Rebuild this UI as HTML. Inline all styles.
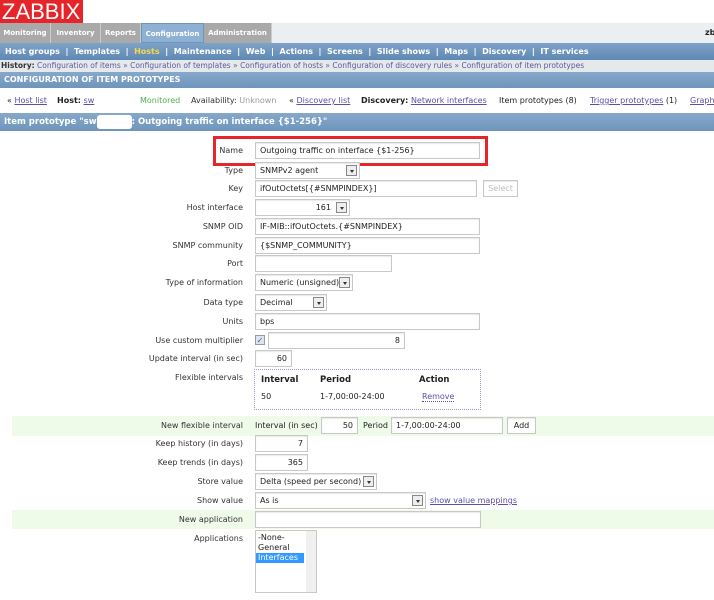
<!DOCTYPE html>
<html><head><meta charset="utf-8"><style>
*{margin:0;padding:0;box-sizing:border-box}
body{width:714px;height:600px;overflow:hidden;background:#fff;font-family:"DejaVu Sans","Liberation Sans",sans-serif;font-size:8px;color:#222;position:relative}
.a{position:absolute;white-space:nowrap}
.tab{position:absolute;top:23px;height:20px;line-height:20px;background:#a9a9a9;color:#fff;font-weight:bold;font-size:7px;text-align:center;border-right:1px solid #ccc;overflow:hidden}
.sub{position:absolute;top:43px;left:0;width:714px;height:17px;background:linear-gradient(#7fa3c8,#5e88b3);color:#fff;font-weight:bold;font-size:8px;line-height:17px}
.bar{position:absolute;left:0;width:714px;background:linear-gradient(#86a8ca,#6f95bc);color:#fff;font-weight:bold}
.lbl{position:absolute;right:471px;white-space:nowrap;font-size:8px;color:#333}
.in{position:absolute;border:1px solid #c8c8c8;background:#fff;font-size:8px;line-height:15px;padding:0 4px;height:17px;white-space:nowrap;box-shadow:inset 0 1px 1px #e8e8e8}
.r{text-align:right}
.dd{position:absolute;right:2px;top:2px;width:11px;height:11px;border:1px solid #888;background:#eee}
.dd:after{content:"";position:absolute;left:3px;top:4px;border:2px solid transparent;border-top:3px solid #333}
.sel{padding-right:18px}
a,.u{color:#5b4fa8;text-decoration:underline}
.green{position:absolute;left:12px;width:702px;background:#eefbe9}
</style></head><body>
<div class="a" style="left:0;top:0;width:83px;height:23px;background:#e5252a;color:#fff;font-family:'Liberation Sans',sans-serif;font-size:22px;line-height:24px;padding-left:2px;letter-spacing:0px">ZABBIX</div>
<div class="a" style="left:0;top:23px;width:714px;height:20px;background:#eceff1"></div>
<div class="tab" style="left:0;width:51px">Monitoring</div>
<div class="tab" style="left:51px;width:50px">Inventory</div>
<div class="tab" style="left:101px;width:40px">Reports</div>
<div class="tab" style="left:141px;width:63px;background:#8db0d3;border:1px solid #6f95bc">Configuration</div>
<div class="tab" style="left:204px;width:68px">Administration</div>
<div class="a" style="left:705px;top:28px;font-weight:bold">zb</div>
<div class="sub"><span class="a" style="left:5px">Host groups &nbsp;|&nbsp; Templates &nbsp;|&nbsp; <span style="color:#f5d94a">Hosts</span> &nbsp;|&nbsp; Maintenance &nbsp;|&nbsp; Web &nbsp;|&nbsp; Actions &nbsp;|&nbsp; Screens &nbsp;|&nbsp; Slide shows &nbsp;|&nbsp; Maps &nbsp;|&nbsp; Discovery &nbsp;|&nbsp; IT services</span></div>
<div class="a" style="left:0;top:60px;width:714px;height:12px;background:#e6e9ec;line-height:12px;padding-left:1px;color:#5b5a9a;font-size:7.5px"><b style="color:#333">History:</b> Configuration of items » Configuration of templates » Configuration of hosts » Configuration of discovery rules » Configuration of item prototypes</div>
<div class="bar" style="top:72px;height:16px;line-height:16px;padding-left:4px;font-size:8px">CONFIGURATION OF ITEM PROTOTYPES</div>
<div class="a" style="top:96px;left:7px">« <a>Host list</a></div>
<div class="a" style="top:96px;left:57px"><b>Host:</b> <a>sw</a></div>
<div class="a" style="top:96px;left:140px;color:#4caf50">Monitored</div>
<div class="a" style="top:96px;left:191px"><span style="color:#333">Availability:</span> <span style="color:#999">Unknown</span></div>
<div class="a" style="top:96px;left:289px">« <a>Discovery list</a></div>
<div class="a" style="top:96px;left:361px"><b>Discovery:</b> <a>Network interfaces</a></div>
<div class="a" style="top:96px;left:499px">Item prototypes (8)</div>
<div class="a" style="top:96px;left:590px"><a>Trigger prototypes</a> (1)</div>
<div class="a" style="top:96px;left:690px"><a>Graph</a></div>
<div class="bar" style="top:113px;height:18px;line-height:18px;padding-left:4px;font-size:8.5px">Item prototype "sw<span style="display:inline-block;width:35px;height:14px;background:#fff;vertical-align:middle;border-radius:3px"></span>: Outgoing traffic on interface {$1-256}"</div>

<div class="a" style="left:213px;top:136px;width:275px;height:30px;border:3px solid #e5252a"></div>
<div class="lbl" style="top:146px">Name</div><div class="in" style="left:255px;top:142px;width:225px">Outgoing traffic on interface {$1-256}</div>
<div class="lbl" style="top:166px">Type</div><div class="in sel" style="left:255px;top:162px;width:105px">SNMPv2 agent<span class="dd"></span></div>
<div class="lbl" style="top:184px">Key</div><div class="in" style="left:255px;top:180px;width:222px">ifOutOctets[{#SNMPINDEX}]</div>
<div class="in" style="left:483px;top:180px;width:35px;color:#bbb;text-align:center">Select</div>
<div class="lbl" style="top:203px">Host interface</div><div class="in sel r" style="left:255px;top:199px;width:95px">161<span class="dd"></span></div>
<div class="lbl" style="top:222px">SNMP OID</div><div class="in" style="left:255px;top:218px;width:225px">IF-MIB::ifOutOctets.{#SNMPINDEX}</div>
<div class="lbl" style="top:241px">SNMP community</div><div class="in" style="left:255px;top:237px;width:225px">{$SNMP_COMMUNITY}</div>
<div class="lbl" style="top:259px">Port</div><div class="in" style="left:255px;top:255px;width:137px"></div>
<div class="lbl" style="top:278px">Type of information</div><div class="in sel" style="left:255px;top:274px;width:98px">Numeric (unsigned)<span class="dd"></span></div>
<div class="lbl" style="top:298px">Data type</div><div class="in sel" style="left:255px;top:294px;width:72px">Decimal<span class="dd"></span></div>
<div class="lbl" style="top:317px">Units</div><div class="in" style="left:255px;top:313px;width:225px">bps</div>
<div class="lbl" style="top:336px">Use custom multiplier</div>
<div class="a" style="left:255px;top:335px;width:10px;height:10px;border:1px solid #99a;background:#dde4f0;color:#4060b0;font-size:8px;line-height:9px;text-align:center">✓</div>
<div class="in r" style="left:268px;top:332px;width:137px">8</div>
<div class="lbl" style="top:354px">Update interval (in sec)</div><div class="in r" style="left:255px;top:350px;width:37px">60</div>
<div class="lbl" style="top:373px">Flexible intervals</div>
<div class="a" style="left:254px;top:369px;width:227px;height:41px;border:1px dotted #99b"></div>
<div class="a" style="left:261px;top:375px;font-weight:bold;font-size:8.5px">Interval</div>
<div class="a" style="left:320px;top:375px;font-weight:bold;font-size:8.5px">Period</div>
<div class="a" style="left:419px;top:375px;font-weight:bold;font-size:8.5px">Action</div>
<div class="a" style="left:261px;top:392px">50</div>
<div class="a" style="left:320px;top:392px">1-7,00:00-24:00</div>
<div class="a" style="left:422px;top:392px;color:#5b4fa8;border-bottom:1px dotted #5b4fa8">Remove</div>
<div class="green" style="top:416px;height:20px"></div>
<div class="lbl" style="top:421px">New flexible interval</div>
<div class="a" style="left:255px;top:421px">Interval (in sec)</div>
<div class="in r" style="left:321px;top:417px;width:37px">50</div>
<div class="a" style="left:363px;top:421px">Period</div>
<div class="in" style="left:391px;top:417px;width:112px">1-7,00:00-24:00</div>
<div class="in" style="left:507px;top:417px;width:29px;text-align:center">Add</div>
<div class="lbl" style="top:439px">Keep history (in days)</div><div class="in r" style="left:255px;top:435px;width:53px">7</div>
<div class="lbl" style="top:458px">Keep trends (in days)</div><div class="in r" style="left:255px;top:454px;width:53px">365</div>
<div class="lbl" style="top:477px">Store value</div><div class="in sel" style="left:255px;top:473px;width:122px">Delta (speed per second)<span class="dd"></span></div>
<div class="lbl" style="top:496px">Show value</div><div class="in sel" style="left:255px;top:492px;width:171px">As is<span class="dd"></span></div>
<div class="a" style="left:430px;top:496px"><a>show value mappings</a></div>
<div class="green" style="top:510px;height:19px"></div>
<div class="lbl" style="top:515px">New application</div>
<div class="in" style="left:255px;top:511px;width:226px"></div>
<div class="lbl" style="top:534px">Applications</div>
<div class="a" style="left:255px;top:530px;width:62px;height:63px;border:1px solid #c8c8c8;background:#fff;font-size:8px;line-height:10px;padding-top:2px">
<div style="padding-left:2px">-None-</div><div style="padding-left:2px">General</div><div style="padding-left:2px;background:#3399ff;color:#fff;width:48px">Interfaces</div>
<div style="position:absolute;right:0;top:0;width:10px;height:61px;background:#f0f0f0"></div></div>
</body></html>
